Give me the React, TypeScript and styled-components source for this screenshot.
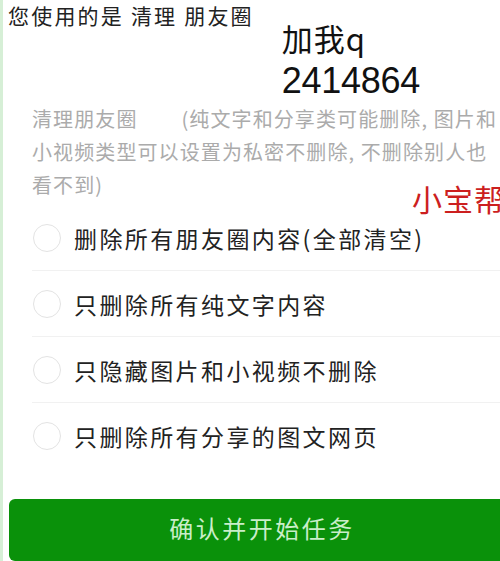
import React from 'react';
import styled, { createGlobalStyle } from 'styled-components';

const GlobalStyle = createGlobalStyle`
  html, body {
    margin: 0;
    padding: 0;
    background: #fff;
    overflow: hidden;
  }
  body {
    font-family: "Noto Sans CJK SC", "Noto Sans", sans-serif;
  }
`;

const Page = styled.div`
    position: relative;
    width: 500px;
    height: 561px;
    overflow: hidden;
    background: #fff;
    border-left: 3px solid #d6efd6;
    box-sizing: border-box;
    padding-left: 5px;
`;

const Header = styled.div`
    display: flex;
    align-items: flex-start;
    height: 102px;
`;

const Title = styled.div`
    font-size: 21px;
    line-height: 30px;
    letter-spacing: 2.2px;
    color: #222;
    white-space: pre;
`;

const Contact = styled.div`
    margin-left: 28px;
    margin-top: 16px;
    font-size: 31px;
    line-height: 43px;
    color: #111;
    > .qq{
      letter-spacing: 1px;
    }
    > .num{
      font-family: "Liberation Sans", "Noto Sans CJK SC", sans-serif;
      font-size: 36px;
      letter-spacing: -0.3px;
    }
`;

const Desc = styled.div`
    padding-left: 24px;
    font-size: 20px;
    line-height: 33px;
    letter-spacing: 1.1px;
    color: #ababab;
    > div{
      white-space: pre;
    }
    .gap{
      display: inline-block;
      width: 44px;
    }
`;

const Stamp = styled.div`
    position: absolute;
    left: 409px;
    top: 178px;
    font-size: 30px;
    line-height: 40px;
    letter-spacing: 1px;
    color: #cc1f1f;
    white-space: nowrap;
`;

const OptionList = styled.ul`
    list-style: none;
    margin: 4px 0 0;
    padding: 0 0 0 24px;
`;

const Option = styled.li<{ last?: boolean }>`
    display: flex;
    align-items: center;
    height: 66px;
    box-sizing: border-box;
    border-bottom: 1px solid ${p => (p.last ? 'transparent' : '#f1f1f1')};
`;

const Radio = styled.span`
    width: 26px;
    height: 26px;
    margin-left: 1px;
    border-radius: 50%;
    border: 1.5px solid #e3e3e3;
    flex-shrink: 0;
`;

const OptionText = styled.span`
    margin-left: 13px;
    font-size: 23px;
    letter-spacing: 2.4px;
    color: #222;
    white-space: nowrap;
`;

const SubmitButton = styled.button`
    display: flex;
    align-items: center;
    justify-content: center;
    margin-top: 30px;
    margin-left: 1px;
    width: 506px;
    height: 62px;
    padding: 0 0 6px;
    border: none;
    border-radius: 6px;
    background: #0a910a;
    color: #c9eec9;
    font-family: "Noto Sans CJK SC", sans-serif;
    font-size: 24px;
    letter-spacing: 2.5px;
`;

const options = [
  '删除所有朋友圈内容(全部清空)',
  '只删除所有纯文字内容',
  '只隐藏图片和小视频不删除',
  '只删除所有分享的图文网页',
];

function App() {
  return (
    <Page>
      <GlobalStyle/>
      <Header>
        <Title>您使用的是 清理 朋友圈</Title>
        <Contact>
          <div className="qq">加我q</div>
          <div className="num">2414864</div>
        </Contact>
      </Header>
      <Desc>
        <div>清理朋友圈<span className="gap"/>(纯文字和分享类可能删除, 图片和</div>
        <div>小视频类型可以设置为私密不删除, 不删除别人也</div>
        <div>看不到)</div>
      </Desc>
      <Stamp>小宝帮</Stamp>
      <OptionList>
        {options.map((text, i) => (
          <Option key={text} last={i === options.length - 1}>
            <Radio/>
            <OptionText>{text}</OptionText>
          </Option>
        ))}
      </OptionList>
      <SubmitButton>确认并开始任务</SubmitButton>
    </Page>
  );
}

export default App;
